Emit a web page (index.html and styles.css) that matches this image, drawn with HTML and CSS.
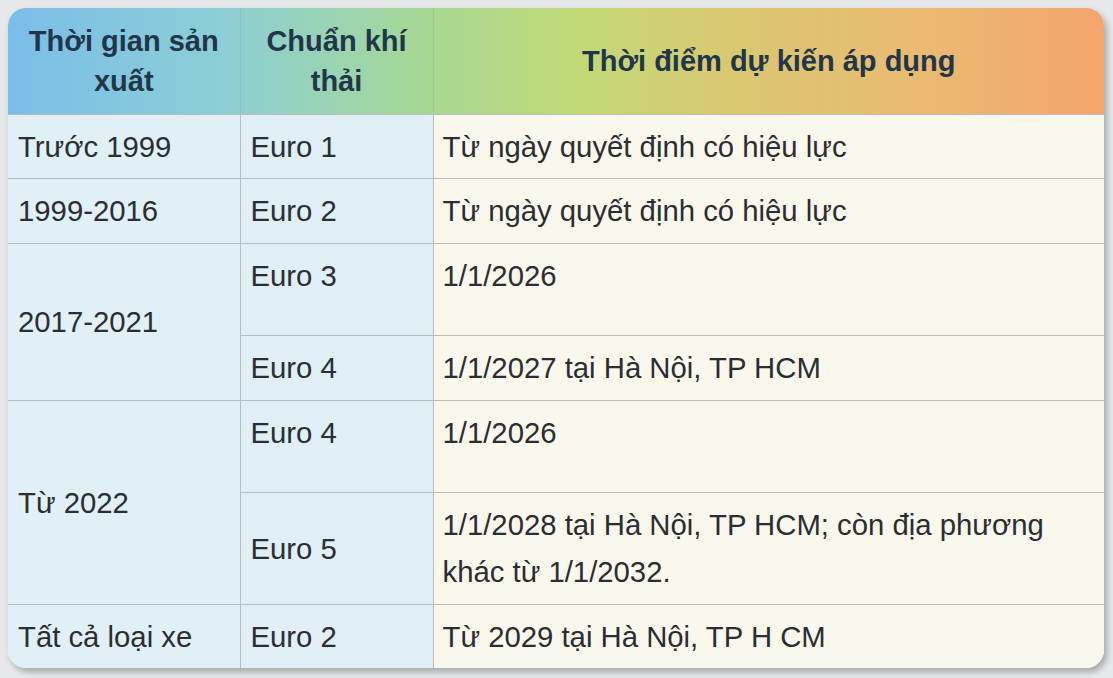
FILE: index.html
```html
<!DOCTYPE html>
<html lang="vi">
<head>
<meta charset="utf-8">
<link rel="stylesheet" href="styles.css">
</head>
<body>
<div class="page">
  <div class="card">
    <table class="tbl">
      <colgroup>
        <col class="c1">
        <col class="c2">
        <col class="c3">
      </colgroup>
      <thead>
        <tr class="head">
          <th>Thời gian sản xuất</th>
          <th>Chuẩn khí thải</th>
          <th>Thời điểm dự kiến áp dụng</th>
        </tr>
      </thead>
      <tbody>
        <tr class="r64">
          <td class="a">Trước 1999</td>
          <td class="b">Euro 1</td>
          <td class="c">Từ ngày quyết định có hiệu lực</td>
        </tr>
        <tr class="r65">
          <td class="a">1999-2016</td>
          <td class="b">Euro 2</td>
          <td class="c">Từ ngày quyết định có hiệu lực</td>
        </tr>
        <tr class="r92">
          <td class="a mid" rowspan="2">2017-2021</td>
          <td class="b">Euro 3</td>
          <td class="c">1/1/2026</td>
        </tr>
        <tr class="r65">
          <td class="b">Euro 4</td>
          <td class="c">1/1/2027 tại Hà Nội, TP HCM</td>
        </tr>
        <tr class="r92">
          <td class="a mid" rowspan="2">Từ 2022</td>
          <td class="b">Euro 4</td>
          <td class="c">1/1/2026</td>
        </tr>
        <tr class="r112">
          <td class="b mid">Euro 5</td>
          <td class="c">1/1/2028 tại Hà Nội, TP HCM; còn địa phương khác từ 1/1/2032.</td>
        </tr>
        <tr class="r64">
          <td class="a">Tất cả loại xe</td>
          <td class="b">Euro 2</td>
          <td class="c">Từ 2029 tại Hà Nội, TP H CM</td>
        </tr>
      </tbody>
    </table>
  </div>
</div>
</body>
</html>
```

FILE: styles.css
```css
html, body {
  margin: 0;
  padding: 0;
}
body {
  background: #e7e8e9;
  font-family: "Liberation Sans", Arial, sans-serif;
  color: #2a2e33;
}
.page {
  width: 1113px;
  height: 678px;
  padding: 8px 9px 10px 8px;
  box-sizing: border-box;
}
.card {
  width: 1096px;
  height: 660px;
  border-radius: 18px;
  overflow: hidden;
  background: #faf8ec;
  box-shadow: 3px 4px 6px rgba(0, 0, 0, 0.28);
}
.tbl {
  width: 100%;
  border-collapse: collapse;
  table-layout: fixed;
}
.c1 { width: 232px; }
.c2 { width: 193px; }
.head {
  height: 106px;
  background: linear-gradient(90deg, #7bbde9 0%, #8ccfd6 20%, #a6d894 38%, #c2d977 52%, #d9c871 66%, #e9bb72 82%, #f4a56c 100%);
}
th {
  font-weight: bold;
  font-size: 29px;
  line-height: 40px;
  color: #22364a;
  text-align: center;
  vertical-align: middle;
  padding: 0 8px;
  border-bottom: 1px solid #b9bcbc;
}
th + th {
  border-left: 1px solid rgba(150, 170, 170, 0.35);
}
td {
  font-size: 29.3px;
  line-height: 47px;
  padding: 8px 9px 8px 10px;
  vertical-align: top;
  border: 1px solid #b9bcbc;
  white-space: normal;
}
tr td:first-child { border-left: none; }
tr td:last-child { border-right: none; }
tbody tr:last-child td { border-bottom: none; }
td.a { background: #e1f0f6; }
td.b { background: #e0eff6; }
td.c { background: #faf8ec; padding-left: 9px; padding-right: 40px; }
td.mid { vertical-align: middle; }
.r64 { height: 64px; }
.r65 { height: 65px; }
.r92 { height: 92px; }
.r112 { height: 112px; }
```
